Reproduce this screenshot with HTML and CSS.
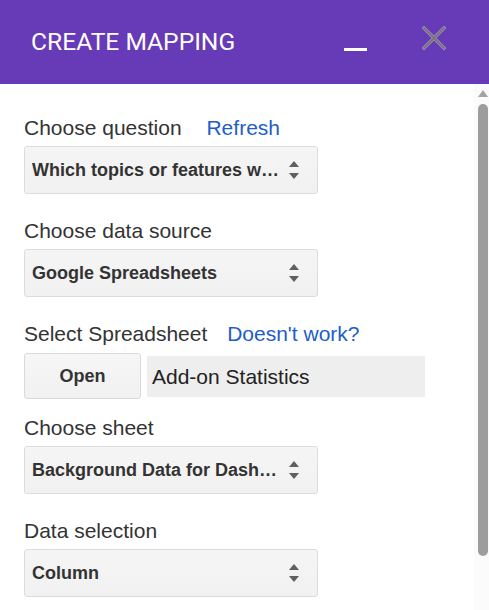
FILE: index.html
```html
<!DOCTYPE html>
<html lang="en">
<head>
    <meta charset="UTF-8">
    <meta name="viewport" content="width=device-width, initial-scale=1.0">
    <title>Create Mapping</title>
    <link rel="stylesheet" href="styles.css">
</head>
<body>
    <div class="dialog">
        <header class="dialog-header">
            <h1 class="dialog-title">CREATE MAPPING</h1>
            <div class="window-controls">
                <button class="ctrl-btn" title="Minimize">
                    <svg width="24" height="26" viewBox="0 0 24 26"><rect x="0" y="22" width="23" height="3" fill="#ffffff"/></svg>
                </button>
                <button class="ctrl-btn" title="Close">
                    <svg width="24" height="26" viewBox="0 0 24 26">
                        <g stroke-linecap="square">
                            <path d="M2 2 L22 22 M22 2 L2 22" stroke="#a08fc8" stroke-width="3.4"/>
                            <path d="M2 2 L22 22 M22 2 L2 22" stroke="#777777" stroke-width="2"/>
                        </g>
                    </svg>
                </button>
            </div>
        </header>

        <div class="dialog-body">
            <form class="mapping-form">
                <div class="field">
                    <div class="field-label">Choose question <a href="#" class="link">Refresh</a></div>
                    <div class="select">
                        <span class="select-text">Which topics or features w…</span>
                        <span class="select-arrows"></span>
                    </div>
                </div>

                <div class="field">
                    <div class="field-label">Choose data source</div>
                    <div class="select">
                        <span class="select-text">Google Spreadsheets</span>
                        <span class="select-arrows"></span>
                    </div>
                </div>

                <div class="field field-sheet">
                    <div class="field-label">Select Spreadsheet <a href="#" class="link link-tight">Doesn't work?</a></div>
                    <div class="picker-row">
                        <button type="button" class="button">Open</button>
                        <div class="picked-name">Add-on Statistics</div>
                    </div>
                </div>

                <div class="field">
                    <div class="field-label">Choose sheet</div>
                    <div class="select">
                        <span class="select-text">Background Data for Dash…</span>
                        <span class="select-arrows"></span>
                    </div>
                </div>

                <div class="field">
                    <div class="field-label">Data selection</div>
                    <div class="select">
                        <span class="select-text">Column</span>
                        <span class="select-arrows"></span>
                    </div>
                </div>
            </form>

            <div class="scrollbar">
                <span class="scroll-up"></span>
                <span class="scroll-thumb"></span>
            </div>
        </div>
    </div>
</body>
</html>
```

FILE: styles.css
```css
/* Base */
body {
    margin: 0;
    font-family: "Liberation Sans", Arial, sans-serif;
    color: #333;
    background: #fff;
}

.dialog {
    height: 610px;
    display: flex;
    flex-direction: column;
    overflow: hidden;
}

/* Header */
.dialog-header {
    height: 84px;
    flex-shrink: 0;
    background: #673ab7;
    display: flex;
    align-items: center;
    padding: 0 43px 0 31px;
    box-sizing: border-box;
}

.dialog-title {
    flex: 1;
    margin: 0 0 2px 0;
    font-family: Roboto, "Liberation Sans", sans-serif;
    font-weight: 400;
    font-size: 24.6px;
    color: #fff;
}

.window-controls {
    display: flex;
    gap: 54px;
    align-self: flex-start;
    margin-top: 26px;
}

.ctrl-btn {
    padding: 0;
    border: none;
    background: none;
    cursor: pointer;
    display: block;
}

.ctrl-btn svg {
    display: block;
}

/* Body + fake scrollbar */
.dialog-body {
    flex: 1;
    display: flex;
    min-height: 0;
}

.mapping-form {
    flex: 1;
    padding: 32px 0 0 24px;
}

.scrollbar {
    width: 15px;
    background: #fbfbfb;
    display: flex;
    flex-direction: column;
    align-items: center;
    padding-top: 6px;
    padding-left: 2px;
    box-sizing: border-box;
}

.scroll-up {
    width: 0;
    height: 0;
    border-left: 5px solid transparent;
    border-right: 5px solid transparent;
    border-bottom: 7px solid #a3a3a3;
}

.scroll-thumb {
    width: 10px;
    height: 452px;
    margin-top: 7px;
    background: #9d9d9d;
    border-radius: 5px;
}

/* Fields */
.field {
    margin-bottom: 25px;
}

.field-sheet {
    margin-bottom: 17px;
}

.field-label {
    font-size: 21px;
    line-height: 24px;
    margin-bottom: 6px;
    color: #333;
}

.field-sheet .field-label {
    margin-bottom: 7px;
}

.link {
    color: #1d5ec8;
    text-decoration: none;
    margin-left: 19px;
}

.link-tight {
    margin-left: 14px;
}

.select {
    width: 294px;
    height: 48px;
    box-sizing: border-box;
    border: 1px solid #dcdcdc;
    border-radius: 3px;
    background: linear-gradient(#f5f5f5, #f1f1f1);
    display: flex;
    align-items: center;
    padding: 0 18px 0 7px;
}

.select-text {
    flex: 1;
    font-size: 18px;
    font-weight: bold;
    color: #333;
    white-space: nowrap;
    overflow: hidden;
}

.select-arrows {
    width: 10px;
    height: 18px;
    position: relative;
}

.select-arrows::before,
.select-arrows::after {
    content: "";
    position: absolute;
    left: 0;
    border-left: 5px solid transparent;
    border-right: 5px solid transparent;
}

.select-arrows::before {
    top: 0;
    border-bottom: 6px solid #5f5f5f;
}

.select-arrows::after {
    bottom: 0;
    border-top: 6px solid #5f5f5f;
}

/* Spreadsheet picker */
.picker-row {
    display: flex;
    align-items: center;
    gap: 6px;
}

.button {
    width: 117px;
    height: 46px;
    box-sizing: border-box;
    border: 1px solid #d9d9d9;
    border-radius: 3px;
    background: linear-gradient(#f6f6f6, #f1f1f1);
    font-family: "Liberation Sans", Arial, sans-serif;
    font-size: 18px;
    font-weight: bold;
    color: #333;
    cursor: pointer;
}

.picked-name {
    width: 278px;
    height: 41px;
    box-sizing: border-box;
    background: #eeeeee;
    padding-left: 5px;
    font-size: 21px;
    line-height: 41px;
    color: #222;
}
```
